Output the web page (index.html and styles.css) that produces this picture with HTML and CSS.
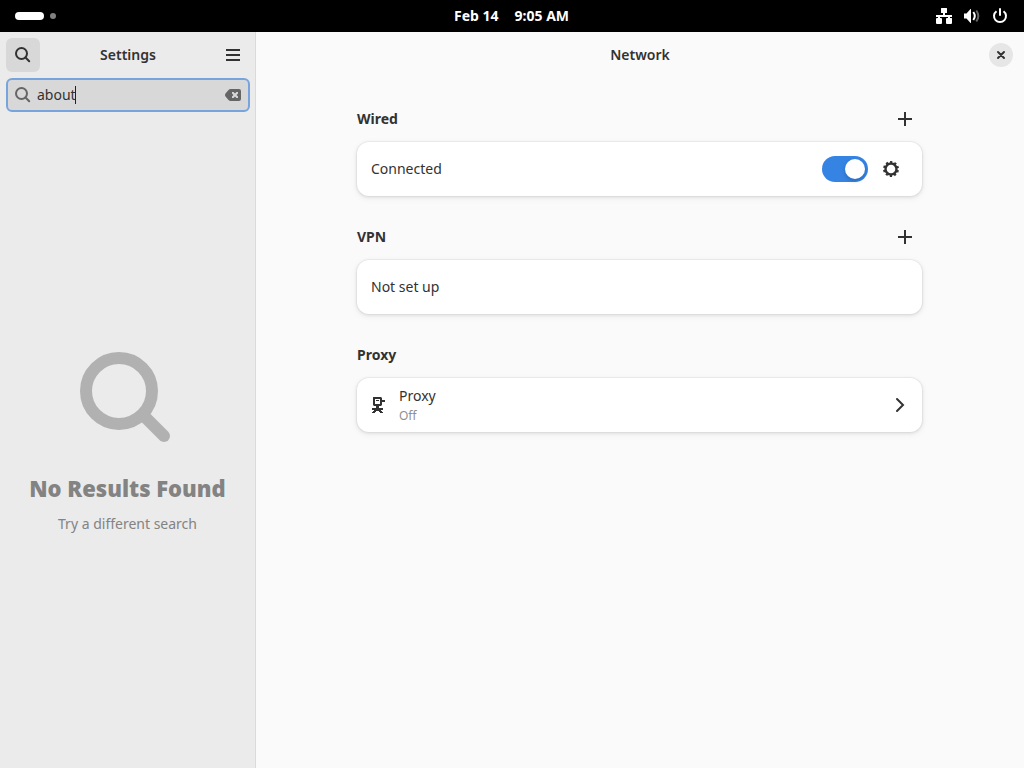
FILE: index.html
```html
<!DOCTYPE html>
<html lang="en">
<head>
<meta charset="utf-8">
<title>Settings</title>
<link rel="stylesheet" href="styles.css">
</head>
<body>
<header class="topbar">
  <button class="workspaces" aria-label="Activities"><span class="pill"></span><span class="dot"></span></button>
  <button class="clock"><span>Feb 14</span><span>9:05 AM</span></button>
  <button class="status" aria-label="System menu">
    <svg class="icon" viewBox="0 0 16 16"><path d="M5 0.5Q5 0 5.5 0H10.5Q11 0 11 .5V4.5Q11 5 10.5 5H9V7H16V9H14V10H15.5Q16 10 16 10.5V15Q16 16 15 16H11Q10 16 10 15V11Q10 10 11 10H12V9H4V10H5Q6 10 6 11V15Q6 16 5 16H1Q0 16 0 15V11Q0 10 1 10H2V9H0V7H7V5H5.5Q5 5 5 4.5Z"/></svg>
    <svg class="icon" viewBox="0 0 16 16"><path d="M0 5.5H2.5L6.5 1H7V15H6.5L2.5 10.5H0Z"/><path class="line" d="M9.3 4Q12.300 8 9.3 12"/><path class="line faint" d="M12.3 2.5Q16.4 8 12.3 13.5"/></svg>
    <svg class="icon" viewBox="0 0 16 16"><path class="line" d="M4.5 3.2A6 6 0 1 0 11.5 3.2"/><path class="line" d="M8 1V7" stroke-linecap="round"/></svg>
  </button>
</header>
<div class="window">
  <aside class="sidebar">
    <div class="headerbar">
      <button class="tool pressed" aria-label="Search"><svg class="icon" viewBox="0 0 16 16"><circle class="line" cx="6.5" cy="6.5" r="5.5"/><path class="line" d="M10.5 10.5L14.2 14.2" stroke-linecap="round"/></svg></button>
      <h1 class="title">Settings</h1>
      <button class="tool" aria-label="Main menu"><svg class="icon" viewBox="0 0 16 16"><path d="M1 2H15V4H1ZM1 7H15V9H1ZM1 12H15V14H1Z"/></svg></button>
    </div>
    <div class="searchrow">
      <div class="entry">
        <svg class="icon dim" viewBox="0 0 16 16"><circle class="line" cx="6.5" cy="6.5" r="5.5"/><path class="line" d="M10.5 10.5L14.2 14.2" stroke-linecap="round"/></svg>
        <div class="field">
          <input class="input" type="text" value="about" aria-label="Search settings">
          <span class="caret"></span>
        </div>
        <button class="clear" aria-label="Clear"><svg class="icon dim" viewBox="0 0 16 16"><path fill-rule="evenodd" d="M5.5 2H14Q16 2 16 4V12Q16 14 14 14H5.5Q4.5 14 3.5 13L0.5 9.5Q-.5 8 .5 6.5L3.5 3Q4.500 2 5.500 2ZM7 5V6.500L8.500 8L7 9.500V11H8.500L10 9.500L11.500 11H13V9.500L11.500 8L13 6.500V5H11.500L10 6.500L8.500 5Z"/></svg></button>
      </div>
    </div>
    <section class="empty">
      <svg class="emptyicon" viewBox="0 0 16 16"><circle class="line" cx="6.5" cy="6.5" r="5.5"/><path class="line" d="M10.5 10.5L14 14" stroke-linecap="round"/></svg>
      <h2 class="emptytitle">No Results Found</h2>
      <p class="emptytext">Try a different search</p>
    </section>
  </aside>
  <main class="content">
    <div class="headerbar">
      <span class="balance"></span>
      <h1 class="title">Network</h1>
      <button class="close" aria-label="Close"><svg class="icon" viewBox="0 0 16 16"><path class="line" d="M5 5L11 11M11 5L5 11" stroke-linecap="round"/></svg></button>
    </div>
    <div class="groups">
      <section class="group">
        <div class="grouphead"><h2 class="heading">Wired</h2><button class="tool add" aria-label="Add wired connection"><svg class="icon" viewBox="0 0 16 16"><path d="M7 1H9V7H15V9H9V15H7V9H1V7H7Z"/></svg></button></div>
        <div class="row">
          <label class="label" for="wired">Connected</label>
          <input class="switch" id="wired" type="checkbox" role="switch" checked>
          <button class="tool" aria-label="Options"><svg class="icon" viewBox="0 0 16 16"><circle cx="8" cy="8" r="5.500" fill="none" stroke="currentColor" stroke-width="2.400"/><circle class="line" cx="8" cy="8" r="7" stroke-dasharray="2.200 2.198" stroke-dashoffset="12.100"/></svg></button>
        </div>
      </section>
      <section class="group">
        <div class="grouphead"><h2 class="heading">VPN</h2><button class="tool add" aria-label="Add VPN"><svg class="icon" viewBox="0 0 16 16"><path d="M7 1H9V7H15V9H9V15H7V9H1V7H7Z"/></svg></button></div>
        <div class="row"><span class="label">Not set up</span></div>
      </section>
      <section class="group">
        <div class="grouphead"><h2 class="heading">Proxy</h2></div>
        <button class="row">
          <svg class="icon" viewBox="0 0 16 16"><path fill-rule="evenodd" d="M2 0H10L11 1V3H14V5H11V8L10 9H8V11H12V13H10V14H11V15H12V16H9V15H8V14H5V15H4V16H1V15H2V14H3V13H1V11H5V9H3L2 8ZM4 2V7H9V2ZM5 3H8V4H5Z"/></svg>
          <span class="label"><span>Proxy</span><small class="sub">Off</small></span>
          <svg class="icon chevron" viewBox="0 0 16 16"><path class="line" d="M5 2L11 8L5 14" stroke-linecap="round"/></svg>
        </button>
      </section>
    </div>
  </main>
</div>
</body>
</html>
```
FILE: styles.css
```css
* { box-sizing: border-box; }
body {
  margin: 0;
  min-height: 100vh;
  display: flex;
  flex-direction: column;
  background: #fafafa;
  color: #323232;
  font: 14px/20px "Noto Sans", sans-serif;
}
button, input { font: inherit; color: inherit; }
button { border: 0; padding: 0; background: none; text-align: left; }
h1, h2, p { margin: 0; }
.icon { display: block; flex: none; width: 16px; height: 16px; fill: currentColor; }
.line { fill: none; stroke: currentColor; stroke-width: 2; }
.faint { opacity: .4; }
.dim { color: #656565; }

.topbar {
  display: grid;
  grid-template-columns: 1fr auto 1fr;
  align-items: center;
  height: 32px;
  padding: 0 16px 0 15px;
  background: #000;
  color: #fff;
  font-weight: 700;
}
.workspaces { display: flex; align-items: center; gap: 6px; }
.pill { width: 29px; height: 8px; border-radius: 4px; background: #fff; }
.dot { width: 6px; height: 6px; border-radius: 50%; background: #808080; }
.clock { display: flex; gap: 16px; }
.status { display: flex; justify-content: flex-end; gap: 12px; }

.window { flex: 1; display: flex; }
.sidebar {
  flex: 0 0 256px;
  display: flex;
  flex-direction: column;
  background: #ebebeb;
  border-right: 1px solid #dadada;
}
.headerbar {
  display: flex;
  align-items: center;
  height: 46px;
  padding: 0 5px 0 6px;
}
.title { flex: 1; text-align: center; font-size: 14px; font-weight: 600; }
.tool {
  display: grid;
  place-items: center;
  width: 34px;
  height: 34px;
  border-radius: 6px;
}
.pressed { background: #d8d8d8; }
.searchrow { padding: 0 5px 6px 6px; }
.entry {
  display: flex;
  align-items: center;
  gap: 6px;
  height: 34px;
  padding: 0 7px;
  border: 2px solid #78a4dd;
  border-radius: 6px;
  background: #d8d8d8;
}
.field { position: relative; flex: 1; min-width: 0; }
.input {
  display: block;
  width: 100%;
  height: 20px;
  padding: 0;
  border: 0;
  outline: 0;
  background: none;
  caret-color: transparent;
}
.caret { position: absolute; left: 38px; top: 1px; width: 1px; height: 18px; background: #222; }
.empty {
  flex: 1;
  display: flex;
  flex-direction: column;
  align-items: center;
  justify-content: center;
  text-align: center;
  color: #838383;
}
.emptyicon { width: 96px; height: 96px; margin-bottom: 24px; color: #b1b1b1; }
.emptytitle { margin-bottom: 10px; font-size: 22px; line-height: 32px; font-weight: 900; }

.content { flex: 1; min-width: 0; }
.content .headerbar { padding: 0 11px; }
.balance { width: 24px; }
.close {
  display: grid;
  place-items: center;
  width: 24px;
  height: 24px;
  border-radius: 50%;
  background: #e6e6e6;
}
.groups {
  display: flex;
  flex-direction: column;
  gap: 24px;
  max-width: 614px;
  margin: 0 auto;
  padding: 24px 25px 24px 24px;
}
.group { display: flex; flex-direction: column; gap: 6px; }
.grouphead { display: flex; align-items: center; justify-content: space-between; min-height: 34px; }
.heading { font-size: 14px; font-weight: 700; }
.row {
  display: flex;
  align-items: center;
  gap: 6px;
  width: 100%;
  min-height: 54px;
  padding: 0 14px;
  border-radius: 12px;
  background: #fff;
  box-shadow: 0 0 0 1px rgba(0,0,6,.03), 0 1px 3px 1px rgba(0,0,6,.07), 0 2px 6px 2px rgba(0,0,6,.03);
}
.label { flex: 1; display: flex; flex-direction: column; }
.row > .icon + .label { margin-left: 6px; padding-top: 2px; }
.sub { font-size: 12px; color: #8f8f8f; }
.switch {
  appearance: none;
  display: flex;
  align-items: center;
  width: 46px;
  height: 26px;
  margin: 0;
  padding: 3px;
  border-radius: 13px;
  background: #d8d8d8;
}
.switch::before {
  content: "";
  width: 20px;
  height: 20px;
  border-radius: 50%;
  background: #fff;
  box-shadow: 0 2px 4px rgba(0,0,6,.2);
}
.switch:checked { justify-content: flex-end; background: #3584e4; }
```
